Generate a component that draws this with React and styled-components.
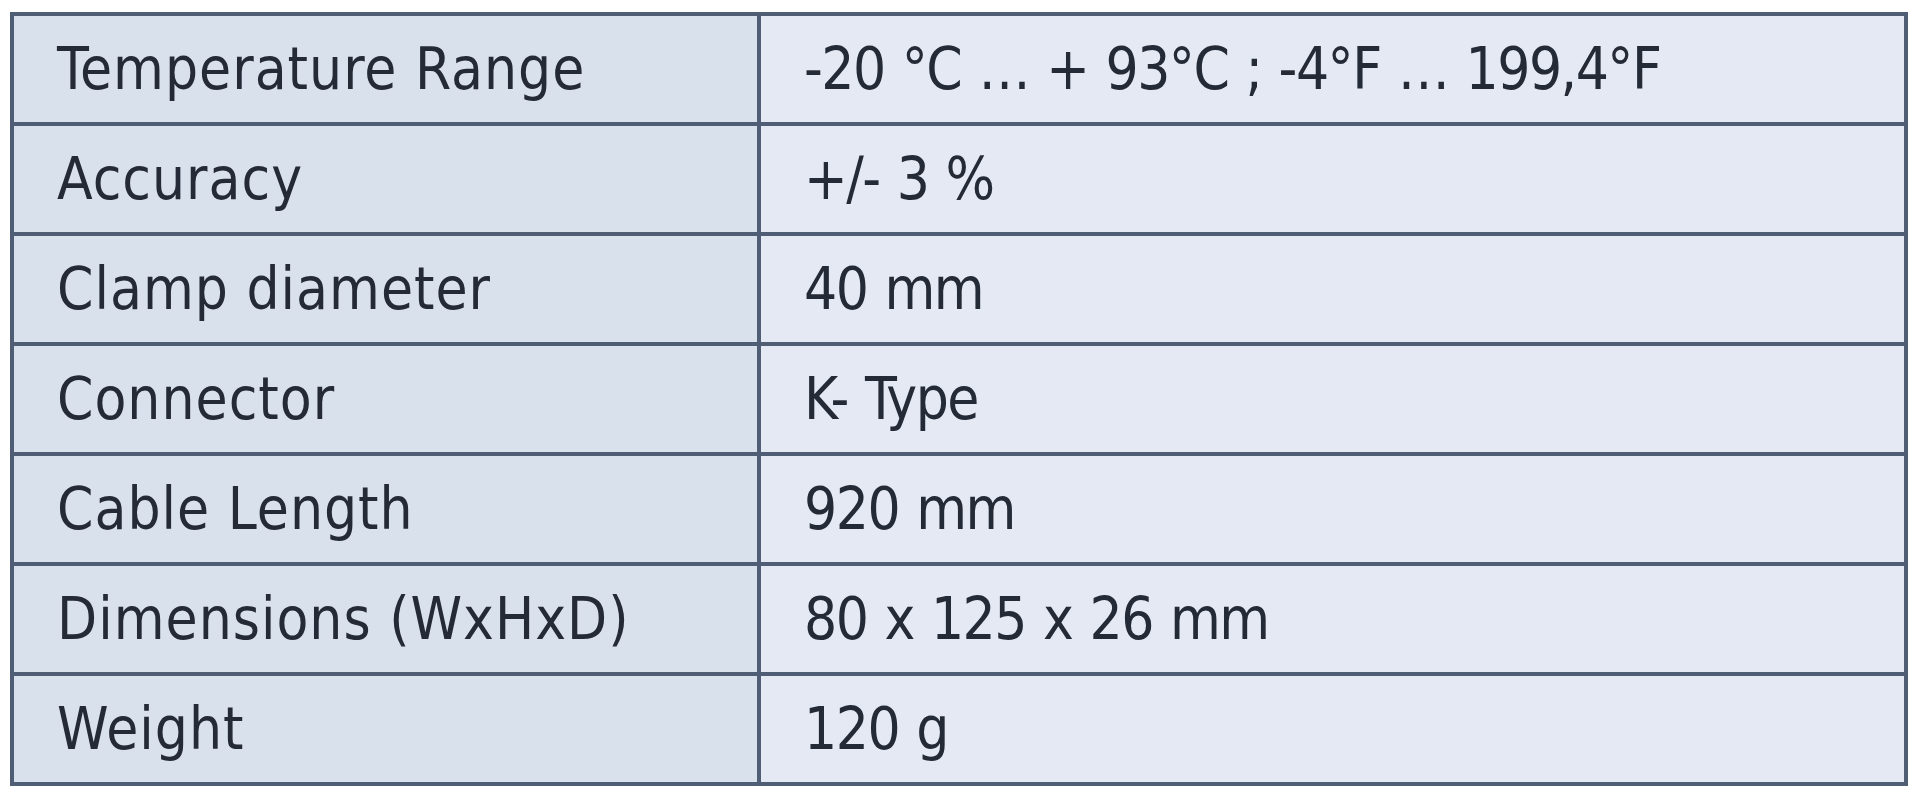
import React from "react";
import styled, { createGlobalStyle } from "styled-components";

const GlobalStyle = createGlobalStyle`
  html, body {
    margin: 0;
    padding: 0;
    background: #ffffff;
  }
`;

const Wrapper = styled.div`
  padding: 12px 0 0 10px;
`;

const Table = styled.table`
  width: 1898px;
  border-collapse: collapse;
  border: 4px solid #4b5a70;
  font-family: "DejaVu Sans Condensed", "DejaVu Sans", sans-serif;
  font-size: 58px;
  color: #242a36;
`;

const Row = styled.tr`
  height: 110px;
`;

const Cell = styled.td`
  border: 4px solid #4f5e74;
  padding: 0 0 0 43px;
  vertical-align: middle;
  white-space: nowrap;
  background: ${(p) => (p.$label ? "#d9e1ec" : "#e4e9f3")};
  width: ${(p) => (p.$label ? "700px" : "auto")};
  letter-spacing: ${(p) => (p.$label ? "1px" : "-1.5px")};
  word-spacing: ${(p) => (p.$label ? "0" : "2px")};
`;

const specs = [
  ["Temperature Range", "-20 °C … + 93°C ; -4°F … 199,4°F"],
  ["Accuracy", "+/- 3 %"],
  ["Clamp diameter", "40 mm"],
  ["Connector", "K- Type"],
  ["Cable Length", "920 mm"],
  ["Dimensions (WxHxD)", "80 x 125 x 26 mm"],
  ["Weight", "120 g"],
];

const App = () => {
  return (
    <>
      <GlobalStyle />
      <Wrapper>
        <Table>
          <tbody>
            {specs.map(([label, value]) => (
              <Row key={label}>
                <Cell $label>{label}</Cell>
                <Cell>{value}</Cell>
              </Row>
            ))}
          </tbody>
        </Table>
      </Wrapper>
    </>
  );
};

export default App;
